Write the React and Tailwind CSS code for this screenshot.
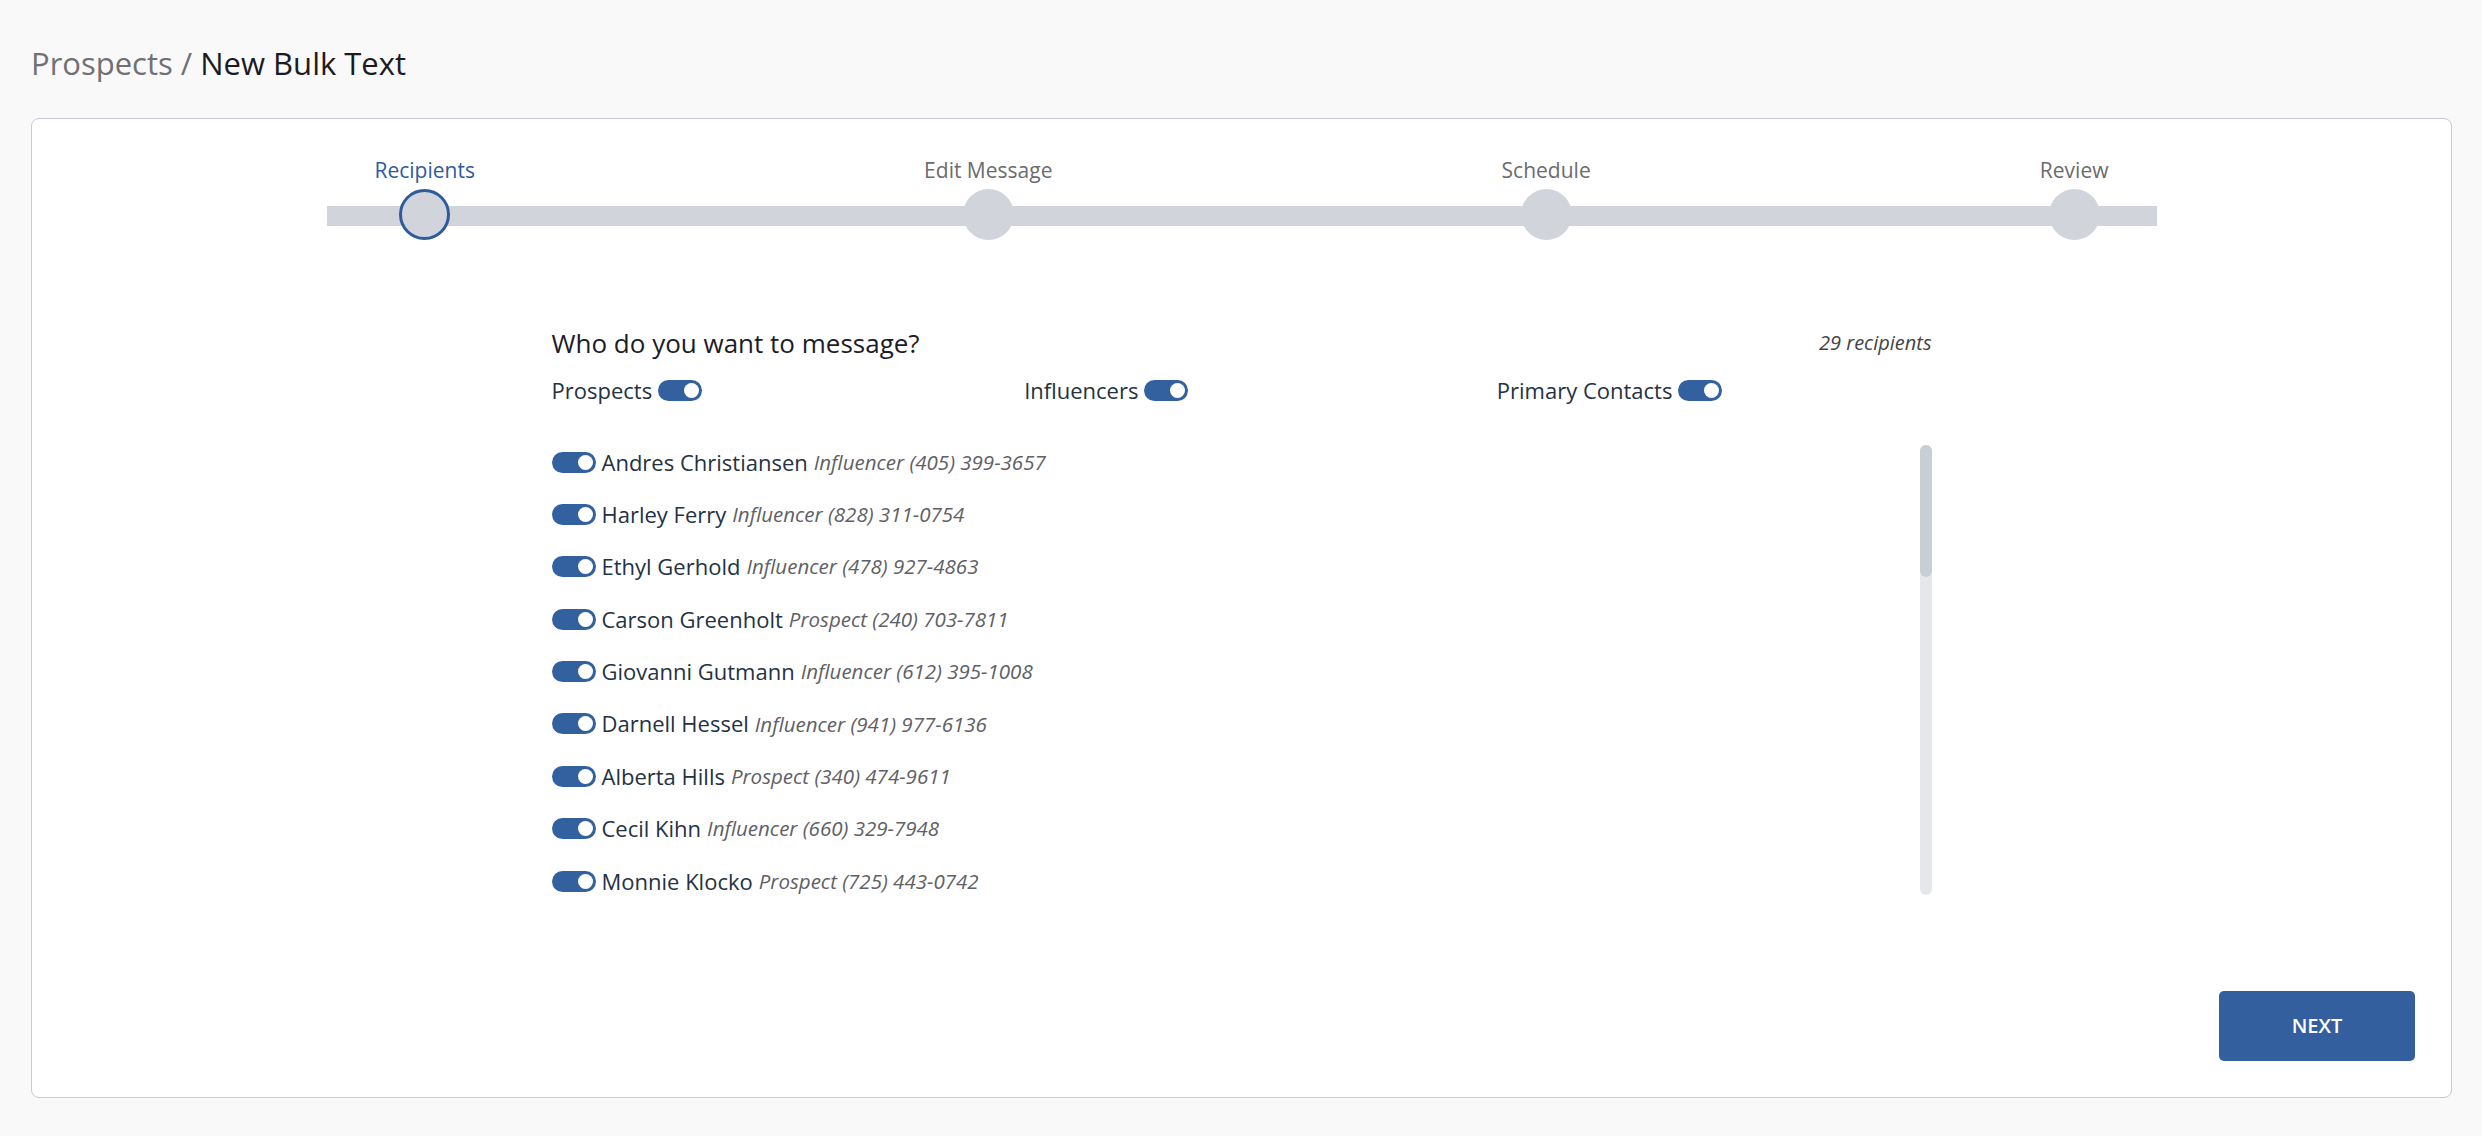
const STEPS = ['Recipients', 'Edit Message', 'Schedule', 'Review'];

// first page of the recipient list; the rest sits below the fold
const RECIPIENTS = [
  ['Andres Christiansen', 'Influencer', '(405) 399-3657'],
  ['Harley Ferry', 'Influencer', '(828) 311-0754'],
  ['Ethyl Gerhold', 'Influencer', '(478) 927-4863'],
  ['Carson Greenholt', 'Prospect', '(240) 703-7811'],
  ['Giovanni Gutmann', 'Influencer', '(612) 395-1008'],
  ['Darnell Hessel', 'Influencer', '(941) 977-6136'],
  ['Alberta Hills', 'Prospect', '(340) 474-9611'],
  ['Cecil Kihn', 'Influencer', '(660) 329-7948'],
  ['Monnie Klocko', 'Prospect', '(725) 443-0742'],
];

function Toggle() {
  return (
    <span className="inline-flex items-center justify-end w-[44px] h-[21px] shrink-0 rounded-full bg-[#33609f] pr-[3px]">
      <span className="block w-[15px] h-[15px] rounded-full bg-white" />
    </span>
  );
}

function Stepper({ current = 0 }) {
  return (
    <div className="relative w-[1830px] mx-auto">
      <div className="absolute left-0 right-0 top-[49px] h-[20px] bg-[#d1d5db]" />
      <div className="relative flex justify-between px-[48px]">
        {STEPS.map((s, i) => (
          <div key={s} className="flex flex-col items-center gap-[5px]">
            <span
              className={`text-[21px] leading-[27px] ${
                i === current ? 'text-[#2f5b9c]' : 'text-[#6b6b70]'
              }`}
            >
              {s}
            </span>
            <span
              className={`block w-[51px] h-[51px] rounded-full bg-[#d1d5db] ${
                i === current ? 'border-[3px] border-[#2f5b9c]' : ''
              }`}
            />
          </div>
        ))}
      </div>
    </div>
  );
}

export default function App() {
  return (
    <div
      className="min-h-screen bg-[#f9f9f9] pt-[45px] pb-[38px]"
      style={{ fontFamily: '"Open Sans", "Noto Sans", sans-serif' }}
    >
      <h1 className="ml-[31px] text-[31px] leading-[36px] text-[#1b1b24]">
        <span className="text-[#707075]">Prospects / </span>New Bulk Text
      </h1>

      <div className="mt-[37px] ml-[31px] mr-[30px] rounded-[8px] border border-[#cac7da] bg-white pt-[38px] pb-[36px] px-[36px]">
        <Stepper current={0} />

        <div className="w-[1380px] mx-auto mt-[87px]">
          <div className="flex items-center justify-between">
            <h2 className="text-[26px] leading-[32px] text-[#1c1c28]">Who do you want to message?</h2>
            <span className="text-[20px] italic text-[#444]">29 recipients</span>
          </div>

          <div className="grid grid-cols-3 gap-x-[38px] mt-[15px] h-[30px] items-center text-[22px] text-[#243242]">
            <div className="flex items-center gap-[6px]">
              Prospects <Toggle />
            </div>
            <div className="flex items-center gap-[6px]">
              Influencers <Toggle />
            </div>
            <div className="flex items-center gap-[6px]">
              Primary Contacts <Toggle />
            </div>
          </div>

          <div className="flex mt-[41px] h-[450px]">
            <ul className="flex-1 flex flex-col gap-[20.4px] pt-[1px] overflow-hidden">
              {RECIPIENTS.map(([name, role, phone]) => (
                <li key={name} className="flex items-center gap-[6px] h-[32px] shrink-0">
                  <Toggle />
                  <span className="text-[22px] text-[#243242]">{name}</span>
                  <span className="text-[20.5px] italic text-[#606066]">
                    {role} {phone}
                  </span>
                </li>
              ))}
            </ul>
            {/* scroll track */}
            <div className="w-[12px] h-full rounded-full bg-[#e5e7eb]">
              <div className="h-[132px] rounded-full bg-[#c9cdd4]" />
            </div>
          </div>
        </div>

        <div className="flex justify-end mt-[96px]">
          <button
            type="button"
            className="w-[196px] h-[70px] rounded-[5px] bg-[#335f9e] text-white text-[20px] font-semibold"
          >
            NEXT
          </button>
        </div>
      </div>
    </div>
  );
}
